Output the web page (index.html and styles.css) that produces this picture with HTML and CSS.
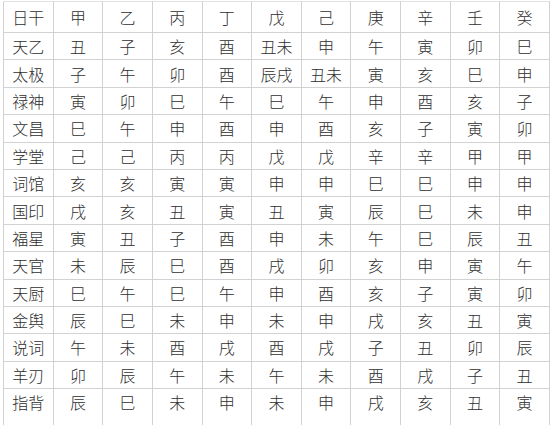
FILE: index.html
```html
<!DOCTYPE html>
<html lang="zh">
<head>
<meta charset="utf-8">
<title>神煞表</title>
<link rel="stylesheet" href="styles.css">
</head>
<body>
<table class="grid">
<tr class="first"><td>日干</td><td>甲</td><td>乙</td><td>丙</td><td>丁</td><td>戊</td><td>己</td><td>庚</td><td>辛</td><td>壬</td><td>癸</td></tr>
<tr><td>天乙</td><td>丑</td><td>子</td><td>亥</td><td>酉</td><td>丑未</td><td>申</td><td>午</td><td>寅</td><td>卯</td><td>巳</td></tr>
<tr><td>太极</td><td>子</td><td>午</td><td>卯</td><td>酉</td><td>辰戌</td><td>丑未</td><td>寅</td><td>亥</td><td>巳</td><td>申</td></tr>
<tr><td>禄神</td><td>寅</td><td>卯</td><td>巳</td><td>午</td><td>巳</td><td>午</td><td>申</td><td>酉</td><td>亥</td><td>子</td></tr>
<tr><td>文昌</td><td>巳</td><td>午</td><td>申</td><td>酉</td><td>申</td><td>酉</td><td>亥</td><td>子</td><td>寅</td><td>卯</td></tr>
<tr><td>学堂</td><td>己</td><td>己</td><td>丙</td><td>丙</td><td>戊</td><td>戊</td><td>辛</td><td>辛</td><td>甲</td><td>甲</td></tr>
<tr><td>词馆</td><td>亥</td><td>亥</td><td>寅</td><td>寅</td><td>申</td><td>申</td><td>巳</td><td>巳</td><td>申</td><td>申</td></tr>
<tr><td>国印</td><td>戌</td><td>亥</td><td>丑</td><td>寅</td><td>丑</td><td>寅</td><td>辰</td><td>巳</td><td>未</td><td>申</td></tr>
<tr><td>福星</td><td>寅</td><td>丑</td><td>子</td><td>酉</td><td>申</td><td>未</td><td>午</td><td>巳</td><td>辰</td><td>丑</td></tr>
<tr><td>天官</td><td>未</td><td>辰</td><td>巳</td><td>酉</td><td>戌</td><td>卯</td><td>亥</td><td>申</td><td>寅</td><td>午</td></tr>
<tr><td>天厨</td><td>巳</td><td>午</td><td>巳</td><td>午</td><td>申</td><td>酉</td><td>亥</td><td>子</td><td>寅</td><td>卯</td></tr>
<tr><td>金舆</td><td>辰</td><td>巳</td><td>未</td><td>申</td><td>未</td><td>申</td><td>戌</td><td>亥</td><td>丑</td><td>寅</td></tr>
<tr><td>说词</td><td>午</td><td>未</td><td>酉</td><td>戌</td><td>酉</td><td>戌</td><td>子</td><td>丑</td><td>卯</td><td>辰</td></tr>
<tr><td>羊刃</td><td>卯</td><td>辰</td><td>午</td><td>未</td><td>午</td><td>未</td><td>酉</td><td>戌</td><td>子</td><td>丑</td></tr>
<tr class="last"><td>指背</td><td>辰</td><td>巳</td><td>未</td><td>申</td><td>未</td><td>申</td><td>戌</td><td>亥</td><td>丑</td><td>寅</td></tr>
</table>
</body>
</html>
```
FILE: styles.css
```css
html, body {
  margin: 0;
  padding: 0;
  background: #ffffff;
  overflow: hidden;
}
body {
  padding: 1px 0 0 3px;
  font-family: "Noto Sans CJK SC", "Noto Sans CJK JP", sans-serif;
  font-size: 16px;
  font-weight: 300;
  color: #2e2e2e;
}
.grid {
  border-collapse: collapse;
  table-layout: fixed;
  width: 547px;
}
.grid td {
  border: 1px solid #d2d2d2;
  height: 26.4px;
  padding: 0;
  text-align: center;
  vertical-align: middle;
  line-height: 18px;
}
.grid .first td {
  height: 30px;
  border-top-color: #e2e2e2;
}
.grid .last td {
  height: 36px;
  border-bottom: none;
  vertical-align: top;
  padding-top: 4px;
}
```
